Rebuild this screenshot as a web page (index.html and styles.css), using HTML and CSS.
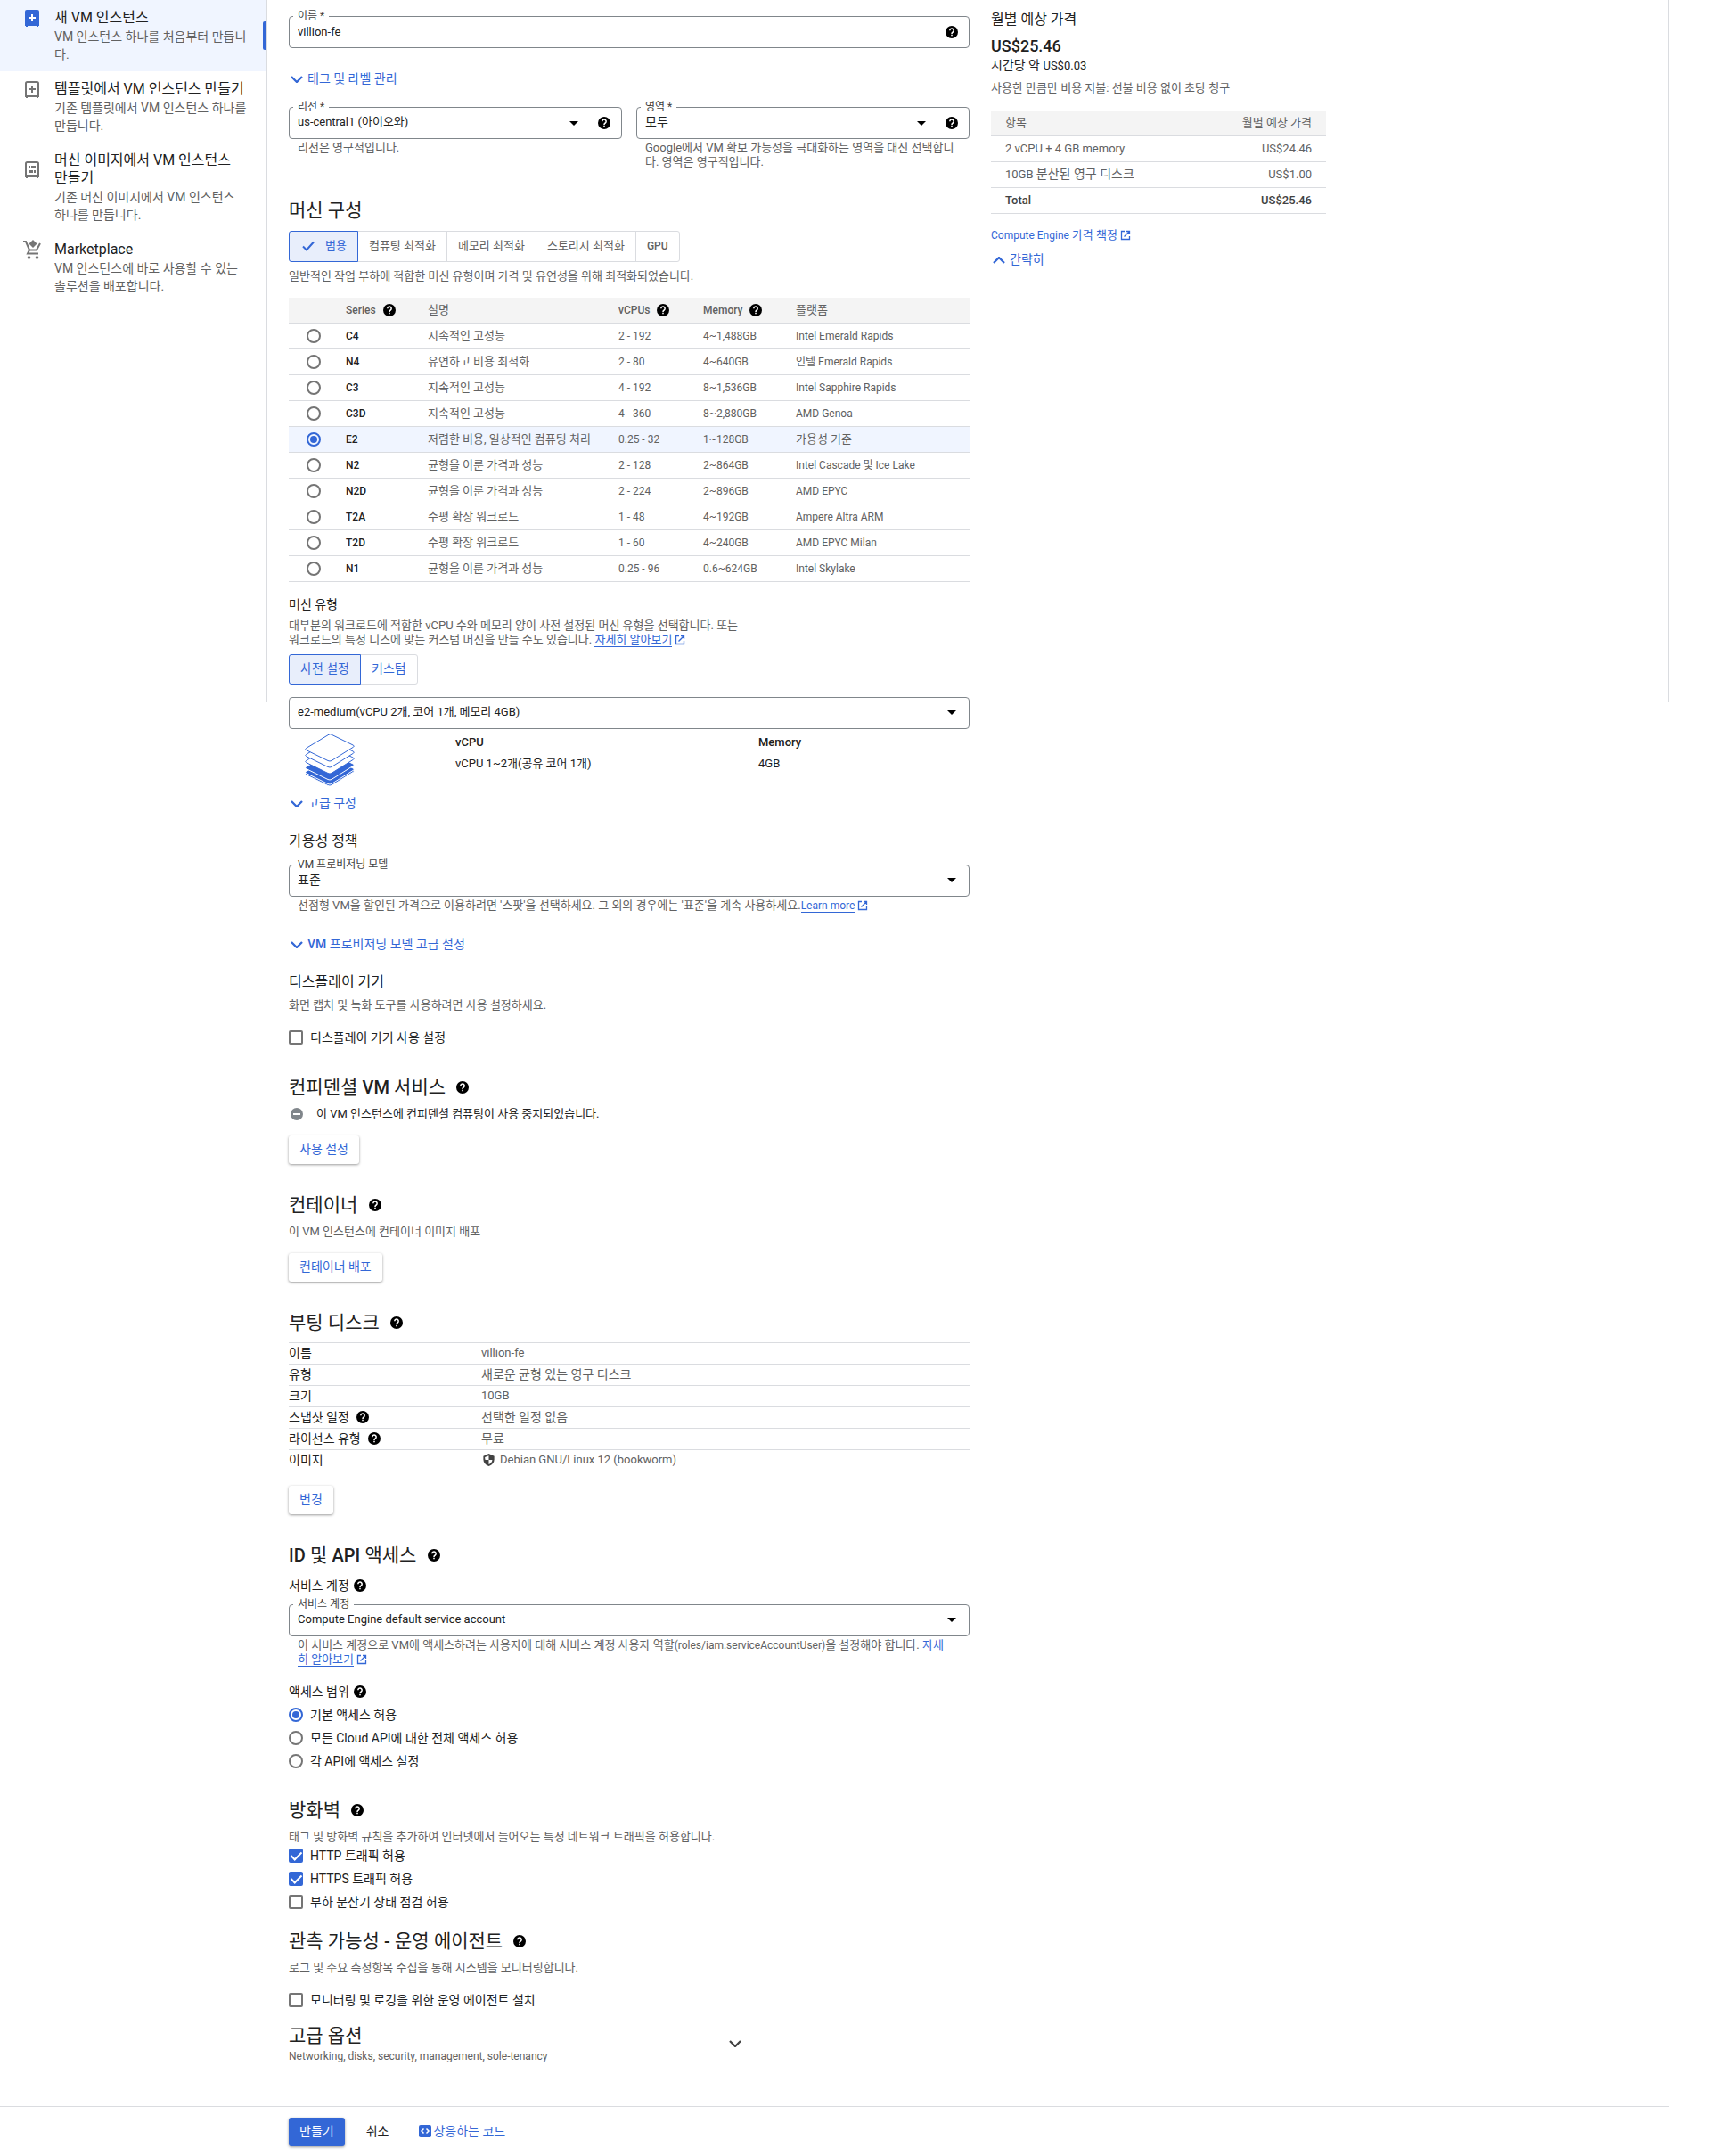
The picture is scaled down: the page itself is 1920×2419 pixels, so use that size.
FILE: index.html
```html
<!DOCTYPE html>
<html lang="ko">
  <head>
    <meta charset="UTF-8" />
    <meta name="viewport" content="width=device-width, initial-scale=1.0" />
    <title>인스턴스 만들기</title>
    <link rel="stylesheet" href="styles.css">
  </head>
  <body>
    <svg class="sprite" aria-hidden="true">
      <symbol id="help" viewBox="0 0 20 20">
        <circle cx="10" cy="10" r="10" />
        <path d="M6.9 7.6a3.1 3.1 0 1 1 5.1 2.3c-1.2 1-2 1.4-2 2.8" fill="none" stroke="#fff" stroke-width="2.2" />
        <path d="M8.9 14h2.2v2.2H8.9z" fill="#fff" />
      </symbol>
      <symbol id="down" viewBox="0 0 14 8">
        <path d="M1 1l6 6 6-6" fill="none" stroke="currentColor" stroke-width="2.3" />
      </symbol>
      <symbol id="up" viewBox="0 0 14 8">
        <path d="M1 7l6-6 6 6" fill="none" stroke="currentColor" stroke-width="2.3" />
      </symbol>
      <symbol id="arrow" viewBox="0 0 10 5">
        <path d="M0 0h10L5 5z" />
      </symbol>
      <symbol id="open" viewBox="0 0 12 12">
        <path d="M5 1.5H1.5v9h9V7M7 1.5h3.5V5M10.5 1.5L4.5 7.5" fill="none" stroke="currentColor" stroke-width="1.3" />
      </symbol>
    </svg>

    <div class="layout">
      <nav class="sidebar">
        <a class="side-item valgt" href="#new">
          <svg class="side-icon" viewBox="0 0 16 19">
            <path d="M2 0h12a2 2 0 0 1 2 2v16h-1v1h-2v-1H3v1H1v-1H0V2a2 2 0 0 1 2-2z" fill="#3367d6" />
            <path d="M8 5v8M4 9h8" stroke="#fff" stroke-width="2" />
          </svg>
          <span class="side-title">새 VM 인스턴스</span>
          <span class="side-text">VM 인스턴스 하나를 처음부터 만듭니다.</span>
        </a>
        <a class="side-item" href="#template">
          <svg class="side-icon" viewBox="0 0 16 19">
            <path d="M1 17V2.5Q1 1 2.5 1h11Q15 1 15 2.5V17z" fill="none" stroke="#757575" stroke-width="2" />
            <path d="M1 17h2v2H1zM13 17h2v2h-2z" fill="#757575" />
            <path d="M8 5v8M4 9h8" stroke="#757575" stroke-width="2" />
          </svg>
          <span class="side-title">템플릿에서 VM 인스턴스 만들기</span>
          <span class="side-text">기존 템플릿에서 VM 인스턴스 하나를 만듭니다.</span>
        </a>
        <a class="side-item" href="#image">
          <svg class="side-icon" viewBox="0 0 16 19">
            <path d="M1 16V2.5Q1 1 2.5 1h11Q15 1 15 2.5V16z" fill="none" stroke="#757575" stroke-width="2" />
            <path d="M0 15h16v3h-1v1h-2v-1H3v1H1v-1H0zM4 5h2v3H4zM7 5h5v3H7zM4 10h5v3H4zM10 10h2v3h-2z" fill="#757575" />
          </svg>
          <span class="side-title">머신 이미지에서 VM 인스턴스 만들기</span>
          <span class="side-text">기존 머신 이미지에서 VM 인스턴스 하나를 만듭니다.</span>
        </a>
        <a class="side-item" href="#marketplace">
          <svg class="side-icon cart" viewBox="0 0 20 22">
            <path d="M0 2h3l4 9.5h8L19 4M7 11.5l-2 4h12" fill="none" stroke="#757575" stroke-width="2" />
            <path d="M11 0l4.500 4.500L11 9 6.500 4.500z" fill="#757575" />
            <circle cx="6.500" cy="20" r="1.800" fill="#757575" />
            <circle cx="15.500" cy="20" r="1.800" fill="#757575" />
          </svg>
          <span class="side-title">Marketplace</span>
          <span class="side-text">VM 인스턴스에 바로 사용할 수 있는 솔루션을 배포합니다.</span>
        </a>
      </nav>

      <main class="form">
        <div class="field">
          <label for="name">이름 *</label>
          <input class="latin" id="name" type="text" value="villion-fe" />
          <svg class="help"><use href="#help" /></svg>
        </div>
        <button class="expand tags"><svg class="chevron"><use href="#down" /></svg>태그 및 라벨 관리</button>
        <div class="pair">
          <div>
            <div class="field">
              <label for="region">리전 *</label>
              <select class="latin" id="region"><option>us-central1 (아이오와)</option></select>
              <svg class="arrow"><use href="#arrow" /></svg>
              <svg class="help"><use href="#help" /></svg>
            </div>
            <p class="hint">리전은 영구적입니다.</p>
          </div>
          <div>
            <div class="field">
              <label for="zone">영역 *</label>
              <select id="zone"><option>모두</option></select>
              <svg class="arrow"><use href="#arrow" /></svg>
              <svg class="help"><use href="#help" /></svg>
            </div>
            <p class="hint">Google에서 VM 확보 가능성을 극대화하는 영역을 대신 선택합니다. 영역은 영구적입니다.</p>
          </div>
        </div>

        <section>
          <h2>머신 구성</h2>
          <div class="tabs families">
            <button class="valgt"><svg class="check" viewBox="0 0 18 18"><path d="M3 9.5l4 4 8-9" fill="none" stroke="currentColor" stroke-width="2" /></svg>범용</button>
            <button>컴퓨팅 최적화</button>
            <button>메모리 최적화</button>
            <button>스토리지 최적화</button>
            <button class="latin">GPU</button>
          </div>
          <p class="desc">일반적인 작업 부하에 적합한 머신 유형이며 가격 및 유연성을 위해 최적화되었습니다.</p>
          <table class="series">
            <thead>
              <tr>
                <th class="pick"></th>
                <th class="name"><span class="with-help">Series <svg class="help"><use href="#help" /></svg></span></th>
                <th class="about ko">설명</th>
                <th class="cpus"><span class="with-help">vCPUs <svg class="help"><use href="#help" /></svg></span></th>
                <th class="memory"><span class="with-help">Memory <svg class="help"><use href="#help" /></svg></span></th>
                <th class="ko">플랫폼</th>
              </tr>
            </thead>
            <tbody>
              <tr><td><input type="radio" name="series" id="c4" /></td><th><label for="c4">C4</label></th><td class="ko">지속적인 고성능</td><td>2 - 192</td><td>4~1,488GB</td><td>Intel Emerald Rapids</td></tr>
              <tr><td><input type="radio" name="series" id="n4" /></td><th><label for="n4">N4</label></th><td class="ko">유연하고 비용 최적화</td><td>2 - 80</td><td>4~640GB</td><td>인텔 Emerald Rapids</td></tr>
              <tr><td><input type="radio" name="series" id="c3" /></td><th><label for="c3">C3</label></th><td class="ko">지속적인 고성능</td><td>4 - 192</td><td>8~1,536GB</td><td>Intel Sapphire Rapids</td></tr>
              <tr><td><input type="radio" name="series" id="c3d" /></td><th><label for="c3d">C3D</label></th><td class="ko">지속적인 고성능</td><td>4 - 360</td><td>8~2,880GB</td><td>AMD Genoa</td></tr>
              <tr class="valgt"><td><input type="radio" name="series" id="e2" checked /></td><th><label for="e2">E2</label></th><td class="ko">저렴한 비용, 일상적인 컴퓨팅 처리</td><td>0.25 - 32</td><td>1~128GB</td><td class="ko">가용성 기준</td></tr>
              <tr><td><input type="radio" name="series" id="n2" /></td><th><label for="n2">N2</label></th><td class="ko">균형을 이룬 가격과 성능</td><td>2 - 128</td><td>2~864GB</td><td>Intel Cascade 및 Ice Lake</td></tr>
              <tr><td><input type="radio" name="series" id="n2d" /></td><th><label for="n2d">N2D</label></th><td class="ko">균형을 이룬 가격과 성능</td><td>2 - 224</td><td>2~896GB</td><td>AMD EPYC</td></tr>
              <tr><td><input type="radio" name="series" id="t2a" /></td><th><label for="t2a">T2A</label></th><td class="ko">수평 확장 워크로드</td><td>1 - 48</td><td>4~192GB</td><td>Ampere Altra ARM</td></tr>
              <tr><td><input type="radio" name="series" id="t2d" /></td><th><label for="t2d">T2D</label></th><td class="ko">수평 확장 워크로드</td><td>1 - 60</td><td>4~240GB</td><td>AMD EPYC Milan</td></tr>
              <tr><td><input type="radio" name="series" id="n1" /></td><th><label for="n1">N1</label></th><td class="ko">균형을 이룬 가격과 성능</td><td>0.25 - 96</td><td>0.6~624GB</td><td>Intel Skylake</td></tr>
            </tbody>
          </table>

          <h4 id="type-title">머신 유형</h4>
          <p class="desc type-desc">대부분의 워크로드에 적합한 vCPU 수와 메모리 양이 사전 설정된 머신 유형을 선택합니다. 또는 워크로드의 특정 니즈에 맞는 커스텀 머신을 만들 수도 있습니다. <a href="#more">자세히 알아보기</a><svg class="open"><use href="#open" /></svg></p>
          <div class="tabs presets">
            <button class="valgt">사전 설정</button>
            <button>커스텀</button>
          </div>
          <div class="field">
            <select class="latin" aria-labelledby="type-title"><option>e2-medium(vCPU 2개, 코어 1개, 메모리 4GB)</option></select>
            <svg class="arrow"><use href="#arrow" /></svg>
          </div>
          <div class="spec">
            <svg class="stack" viewBox="0 0 56 60">
              <defs>
                <path id="layer" d="M1.500 16.500L27 1.200q1.500-.8 3 0l24.500 12q1.500 1 0 2L30 30.500q-2 1-4 0L1.500 18.500q-1.500-1 0-2z" />
              </defs>
              <g fill="#3367d6" stroke="#fff">
                <use href="#layer" y="28" />
                <use href="#layer" y="26" />
                <use href="#layer" y="21" />
              </g>
              <g fill="#fff" stroke="#3367d6">
                <use href="#layer" y="14" />
                <use href="#layer" y="7" />
                <use href="#layer" />
              </g>
            </svg>
            <dl>
              <dt>vCPU</dt>
              <dd class="latin">vCPU 1~2개(공유 코어 1개)</dd>
            </dl>
            <dl>
              <dt>Memory</dt>
              <dd class="latin">4GB</dd>
            </dl>
          </div>
          <button class="expand"><svg class="chevron"><use href="#down" /></svg>고급 구성</button>

          <h3>가용성 정책</h3>
          <div class="field policy">
            <label for="model">VM 프로비저닝 모델</label>
            <select id="model"><option>표준</option></select>
            <svg class="arrow"><use href="#arrow" /></svg>
          </div>
          <p class="hint">선점형 VM을 할인된 가격으로 이용하려면 '스팟'을 선택하세요. 그 외의 경우에는 '표준'을 계속 사용하세요.<a class="latin" href="#learn">Learn more</a><svg class="open"><use href="#open" /></svg></p>
          <button class="expand model-more"><svg class="chevron"><use href="#down" /></svg><span><b>VM</b> 프로비저닝 모델 고급 설정</span></button>

          <h3>디스플레이 기기</h3>
          <p class="desc display-desc">화면 캡처 및 녹화 도구를 사용하려면 사용 설정하세요.</p>
          <div class="options spaced">
            <label><input type="checkbox" />디스플레이 기기 사용 설정</label>
          </div>
        </section>

        <section>
          <h2>컨피덴셜 <b>VM</b> 서비스 <svg class="help"><use href="#help" /></svg></h2>
          <p class="status"><svg class="minus" viewBox="0 0 14 14"><circle cx="7" cy="7" r="7" fill="#80868b" /><path d="M3 7h8" stroke="#fff" stroke-width="2" /></svg>이 VM 인스턴스에 컨피덴셜 컴퓨팅이 사용 중지되었습니다.</p>
          <button class="raised">사용 설정</button>
        </section>

        <section>
          <h2>컨테이너 <svg class="help"><use href="#help" /></svg></h2>
          <p class="desc">이 VM 인스턴스에 컨테이너 이미지 배포</p>
          <button class="raised">컨테이너 배포</button>
        </section>

        <section>
          <h2>부팅 디스크 <svg class="help"><use href="#help" /></svg></h2>
          <table class="disk">
            <tr><th>이름</th><td class="latin">villion-fe</td></tr>
            <tr><th>유형</th><td>새로운 균형 있는 영구 디스크</td></tr>
            <tr><th>크기</th><td class="latin">10GB</td></tr>
            <tr><th><span class="with-help">스냅샷 일정 <svg class="help"><use href="#help" /></svg></span></th><td>선택한 일정 없음</td></tr>
            <tr><th><span class="with-help">라이선스 유형 <svg class="help"><use href="#help" /></svg></span></th><td>무료</td></tr>
            <tr><th>이미지</th><td class="latin"><span class="image"><svg class="shield" viewBox="0 0 14 16"><path d="M7 0l7 3v4q0 6-7 9-7-3-7-9V3z" fill="#424242" /><path d="M7 2.5V8H2.5Q2 6 2 4.5zM7 8h4.5Q11 12 7 13.8z" fill="#fff" /></svg>Debian GNU/Linux 12 (bookworm)</span></td></tr>
          </table>
          <button class="raised">변경</button>
        </section>

        <section>
          <h2><b>ID</b> 및 <b>API</b> 액세스 <svg class="help"><use href="#help" /></svg></h2>
          <h4 class="account">서비스 계정 <svg class="help"><use href="#help" /></svg></h4>
          <div class="field">
            <label for="account">서비스 계정</label>
            <select class="latin" id="account"><option>Compute Engine default service account</option></select>
            <svg class="arrow"><use href="#arrow" /></svg>
          </div>
          <p class="hint account-hint">이 서비스 계정으로 VM에 액세스하려는 사용자에 대해 서비스 계정 사용자 역할<span class="latin">(roles/iam.serviceAccountUser)</span>을 설정해야 합니다. <a href="#roles">자세히 알아보기</a><svg class="open"><use href="#open" /></svg></p>
          <h4 class="scope">액세스 범위 <svg class="help"><use href="#help" /></svg></h4>
          <div class="options">
            <label><input type="radio" name="scope" checked />기본 액세스 허용</label>
            <label><input type="radio" name="scope" />모든 Cloud API에 대한 전체 액세스 허용</label>
            <label><input type="radio" name="scope" />각 API에 액세스 설정</label>
          </div>
        </section>

        <section class="after-options">
          <h2>방화벽 <svg class="help"><use href="#help" /></svg></h2>
          <p class="desc">태그 및 방화벽 규칙을 추가하여 인터넷에서 들어오는 특정 네트워크 트래픽을 허용합니다.</p>
          <div class="options">
            <label><input type="checkbox" checked />HTTP 트래픽 허용</label>
            <label><input type="checkbox" checked />HTTPS 트래픽 허용</label>
            <label><input type="checkbox" />부하 분산기 상태 점검 허용</label>
          </div>
        </section>

        <section class="agent">
          <h2>관측 가능성 <b>-</b> 운영 에이전트 <svg class="help"><use href="#help" /></svg></h2>
          <p class="desc">로그 및 주요 측정항목 수집을 통해 시스템을 모니터링합니다.</p>
          <div class="options spaced">
            <label><input type="checkbox" />모니터링 및 로깅을 위한 운영 에이전트 설치</label>
          </div>
        </section>

        <section class="advanced">
          <div>
            <h2>고급 옵션</h2>
            <p class="latin">Networking, disks, security, management, sole-tenancy</p>
          </div>
          <svg class="chevron"><use href="#down" /></svg>
        </section>
      </main>

      <aside class="estimate">
        <h3>월별 예상 가격</h3>
        <p class="price">US$25.46</p>
        <p class="hourly">시간당 약 <span class="latin">US$0.03</span></p>
        <p class="desc">사용한 만큼만 비용 지불: 선불 비용 없이 초당 청구</p>
        <table class="costs">
          <thead><tr><th>항목</th><th>월별 예상 가격</th></tr></thead>
          <tbody>
            <tr><td>2 vCPU + 4 GB memory</td><td>US$24.46</td></tr>
            <tr><td>10GB <span class="ko">분산된 영구 디스크</span></td><td>US$1.00</td></tr>
            <tr class="total"><td>Total</td><td>US$25.46</td></tr>
          </tbody>
        </table>
        <p class="pricing"><a href="#pricing">Compute Engine <span class="ko">가격 책정</span></a><svg class="open"><use href="#open" /></svg></p>
        <button class="expand"><svg class="chevron"><use href="#up" /></svg>간략히</button>
      </aside>
    </div>

    <footer>
      <button class="primary">만들기</button>
      <button class="cancel">취소</button>
      <button class="code"><svg viewBox="0 0 14 14"><rect width="14" height="14" rx="2" fill="#3367d6" /><path d="M5.5 4.5L3 7l2.500 2.500M8.500 4.500L11 7 8.500 9.500" fill="none" stroke="#fff" stroke-width="1.500" /></svg>상응하는 코드</button>
    </footer>
  </body>
</html>
```
FILE: styles.css
```css
* {
  box-sizing: border-box;
}

body {
  margin: 0;
  padding-right: 47px;
  background-color: white;
  color: #212121;
  font-family: Roboto, "Noto Sans CJK KR", sans-serif;
  font-size: 14px;
  line-height: 20px;
}

h2, h3, h4, p, dl, dd {
  margin: 0;
  font-weight: 400;
}

h2 {
  display: flex;
  align-items: center;
  font-size: 21px;
  line-height: 28px;
  white-space: pre;
}

h2 b {
  font-size: 20px;
  font-weight: 500;
}

h2 .help {
  margin-left: 7px;
}

h3 {
  margin-top: 20px;
  font-size: 16px;
  line-height: 24px;
}

h4 {
  display: flex;
  align-items: center;
  gap: 5px;
  font-size: 14px;
}

section {
  padding-top: 32px;
}

svg {
  flex: none;
}

a {
  color: #3367d6;
  text-decoration: none;
}

button, input, select {
  margin: 0;
  padding: 0;
  border: none;
  background: none;
  color: inherit;
  font: inherit;
}

button {
  cursor: pointer;
}

table {
  width: 100%;
  border-collapse: collapse;
}

th {
  font-weight: 400;
  text-align: left;
}

th, td {
  padding: 0;
}

.sprite {
  display: none;
}

.help {
  width: 14px;
  height: 14px;
  fill: black;
}

.chevron {
  width: 14px;
  height: 8px;
}

.arrow {
  width: 10px;
  height: 5px;
}

.open {
  width: 12px;
  height: 12px;
  margin-left: 3px;
  color: #3367d6;
  vertical-align: -2px;
}

.layout {
  display: flex;
  align-items: flex-start;
}

/* venstre menu */
.sidebar {
  flex: none;
  width: 300px;
  min-height: 788px;
  border-right: 1px solid #dadce0;
}

.side-item {
  position: relative;
  display: grid;
  grid-template-columns: 20px 1fr;
  column-gap: 15px;
  row-gap: 1px;
  align-items: center;
  padding: 10px 20px 9px 26px;
  color: #212121;
}

.side-item.valgt {
  background-color: #f0f5ff;
}

.side-item.valgt::after {
  content: "";
  position: absolute;
  top: 24px;
  right: 0;
  width: 4px;
  height: 32px;
  border-radius: 2px 0 0 2px;
  background-color: #3367d6;
}

.side-icon {
  width: 16px;
  height: 19px;
  justify-self: center;
}

.side-icon.cart {
  width: 20px;
  height: 22px;
  margin: -1px 0;
}

.side-title {
  font-size: 16px;
  word-break: keep-all;
}

.side-text {
  grid-column: 2;
  color: #616161;
}

/* formular */
.form {
  flex: none;
  width: 764px;
  margin-left: 24px;
  padding: 18px 0 47px;
}

.field {
  position: relative;
  display: flex;
  align-items: center;
  height: 36px;
  padding: 0 12px 0 9px;
  border: 1px solid #80868b;
  border-radius: 4px;
}

.field label {
  position: absolute;
  top: -9px;
  left: 4px;
  padding: 0 5px;
  background-color: white;
  color: #424242;
  font-size: 12px;
  line-height: 16px;
}

.field input, .field select {
  flex: 1;
  min-width: 0;
  height: 34px;
  padding-bottom: 2px;
  appearance: none;
  outline: none;
}

.field .latin {
  font-size: 13px;
}

.field .arrow {
  margin: 0 2px;
}

.field .arrow + .help {
  margin-left: 20px;
}

.expand {
  display: flex;
  align-items: center;
  gap: 5px;
  margin-left: 2px;
  padding-bottom: 2px;
  color: #3367d6;
  line-height: 18px;
}

.expand b {
  font-weight: 500;
}

.expand .chevron {
  margin-top: 2px;
}

.tags {
  margin-top: 25px;
  margin-bottom: 21px;
}

.pair {
  display: grid;
  grid-template-columns: 1fr 1fr;
  gap: 16px;
}

.hint {
  padding: 2px 10px 0;
  color: #616161;
  font-size: 13px;
  line-height: 16px;
}

.account-hint {
  padding-right: 20px;
}

.hint .latin, .pricing {
  font-size: 12px;
}

.hint a, .desc a, .pricing a {
  border-bottom: 1px solid #3367d6;
}

.desc {
  margin-top: 8px;
  color: #616161;
  font-size: 13px;
  line-height: 16px;
}

.tabs {
  display: flex;
}

.tabs button {
  display: flex;
  align-items: center;
  height: 34px;
  margin-left: -1px;
  padding: 0 12px 1px;
  border: 1px solid #dadce0;
}

.tabs button:first-child {
  margin-left: 0;
  border-radius: 3px 0 0 3px;
}

.tabs button:last-child {
  border-radius: 0 3px 3px 0;
}

.tabs .valgt {
  z-index: 1;
  border-color: #3367d6;
  background-color: #e8eefb;
  color: #3367d6;
}

.families {
  margin-top: 9px;
  color: #616161;
  font-size: 13px;
}

.families button {
  height: 35px;
}

.families .latin {
  font-size: 12px;
  font-weight: 500;
}

.presets {
  margin: 8px 0 14px;
  color: #3367d6;
}

.check {
  width: 18px;
  height: 18px;
  margin-right: 10px;
}

.with-help {
  display: flex;
  align-items: center;
  gap: 8px;
}

.series {
  margin-top: 16px;
  margin-bottom: 15px;
  table-layout: fixed;
  color: #616161;
  font-size: 12px;
}

.series tr, .costs tr {
  height: 29px;
  border-bottom: 1px solid #dadce0;
}

.series thead tr, .costs thead tr {
  height: 28px;
  background-color: #f4f4f4;
}

.series thead th {
  font-weight: 500;
}

.series tbody th {
  color: #212121;
  font-weight: 500;
}

.series .valgt {
  background-color: #f0f5ff;
}

.series .ko, .pricing .ko {
  font-size: 13px;
}

.series thead .ko {
  font-weight: 400;
}

.pick {
  width: 64px;
}

.name {
  width: 92px;
}

.about {
  width: 214px;
}

.cpus {
  width: 95px;
}

.memory {
  width: 104px;
}

input[type="radio"], input[type="checkbox"] {
  flex: none;
  display: grid;
  place-content: center;
  width: 16px;
  height: 16px;
  border: 2px solid #757575;
  border-radius: 50%;
  appearance: none;
}

input[type="checkbox"] {
  border-radius: 2px;
}

input[type="radio"]:checked {
  border-color: #3367d6;
}

input[type="radio"]:checked::before {
  content: "";
  width: 8px;
  height: 8px;
  border-radius: 50%;
  background-color: #3367d6;
}

input[type="checkbox"]:checked {
  border-color: #3367d6;
  background-color: #3367d6;
}

input[type="checkbox"]:checked::before {
  content: "";
  width: 5px;
  height: 10px;
  margin-bottom: 2px;
  border: solid white;
  border-width: 0 2px 2px 0;
  transform: rotate(45deg);
}

.series input {
  margin-left: 20px;
}

.type-desc {
  max-width: 512px;
  margin-top: 6px;
}

.spec {
  display: grid;
  grid-template-columns: 187px 340px 1fr;
  padding: 5px 0 9px;
}

.spec dt {
  margin-bottom: 4px;
  font-size: 13px;
  font-weight: 500;
}

.spec .latin {
  font-size: 13px;
}

.stack {
  width: 56px;
  height: 60px;
  margin-left: 18px;
}

.policy {
  margin-top: 14px;
}

.model-more {
  margin-top: 26px;
}

.display-desc {
  margin-top: 6px;
}

.options {
  display: flex;
  flex-direction: column;
  align-items: flex-start;
}

.options.spaced {
  margin-top: 15px;
}

.options.spaced:last-child {
  margin-bottom: -3px;
}

.options label {
  display: flex;
  align-items: center;
  gap: 8px;
  height: 26px;
}

.status {
  display: flex;
  align-items: center;
  gap: 15px;
  margin-top: 8px;
  padding-left: 2px;
  font-size: 13px;
  line-height: 16px;
}

.minus {
  width: 14px;
  height: 14px;
}

.raised, .primary {
  height: 32px;
  padding: 0 12px 2px;
  border-radius: 3px;
  box-shadow: 0 1px 3px rgba(0, 0, 0, 0.4);
  color: #3367d6;
}

.raised {
  display: block;
  margin-top: 16px;
}

.disk {
  margin-top: 8px;
  border-top: 1px solid #dadce0;
}

.disk tr {
  height: 24px;
  border-bottom: 1px solid #dadce0;
}

.disk th {
  width: 216px;
}

.disk td {
  color: #616161;
}

.disk .latin {
  font-size: 13px;
}

.image {
  display: flex;
  align-items: center;
  gap: 6px;
  padding-left: 2px;
}

.shield {
  width: 13px;
  height: 14px;
}

.account {
  margin: 10px 0 11px;
}

.scope {
  margin: 18px 0 3px;
}

.after-options {
  padding-top: 28px;
}

.agent {
  padding-top: 17px;
}

.advanced {
  display: flex;
  align-items: center;
  justify-content: space-between;
  width: 508px;
  padding-top: 16px;
  color: #424242;
}

.advanced h2 {
  color: #212121;
}

.advanced p {
  color: #616161;
  font-size: 12px;
  line-height: 18px;
}

/* pris */
.estimate {
  flex: 1;
  min-height: 788px;
  padding: 10px 0 0 24px;
  border-right: 1px solid #dadce0;
}

.estimate > * {
  max-width: 376px;
}

.estimate h3 {
  margin: 0;
}

.price {
  margin-top: 6px;
  font-size: 18px;
  font-weight: 500;
  line-height: 24px;
}

.hourly {
  line-height: 18px;
}

.hourly .latin {
  font-size: 13px;
}

.costs {
  margin-top: 17px;
  color: #616161;
  font-size: 13px;
}

.costs .ko {
  font-size: 14px;
}

.costs th, .costs td {
  padding: 0 16px;
}

.costs tr > :last-child {
  text-align: right;
}

.total {
  color: #424242;
  font-weight: 500;
}

.pricing {
  margin: 14px 0 8px;
}

footer {
  display: flex;
  align-items: center;
  padding: 12px 0 11px 324px;
  border-top: 1px solid #dadce0;
}

.primary {
  background-color: #3367d6;
  color: white;
}

.cancel, .code {
  padding-bottom: 2px;
}

.cancel {
  margin-left: 24px;
}

.code {
  display: flex;
  align-items: center;
  gap: 2px;
  margin-left: 34px;
  color: #3367d6;
}

.code svg {
  width: 14px;
  height: 14px;
}
```
